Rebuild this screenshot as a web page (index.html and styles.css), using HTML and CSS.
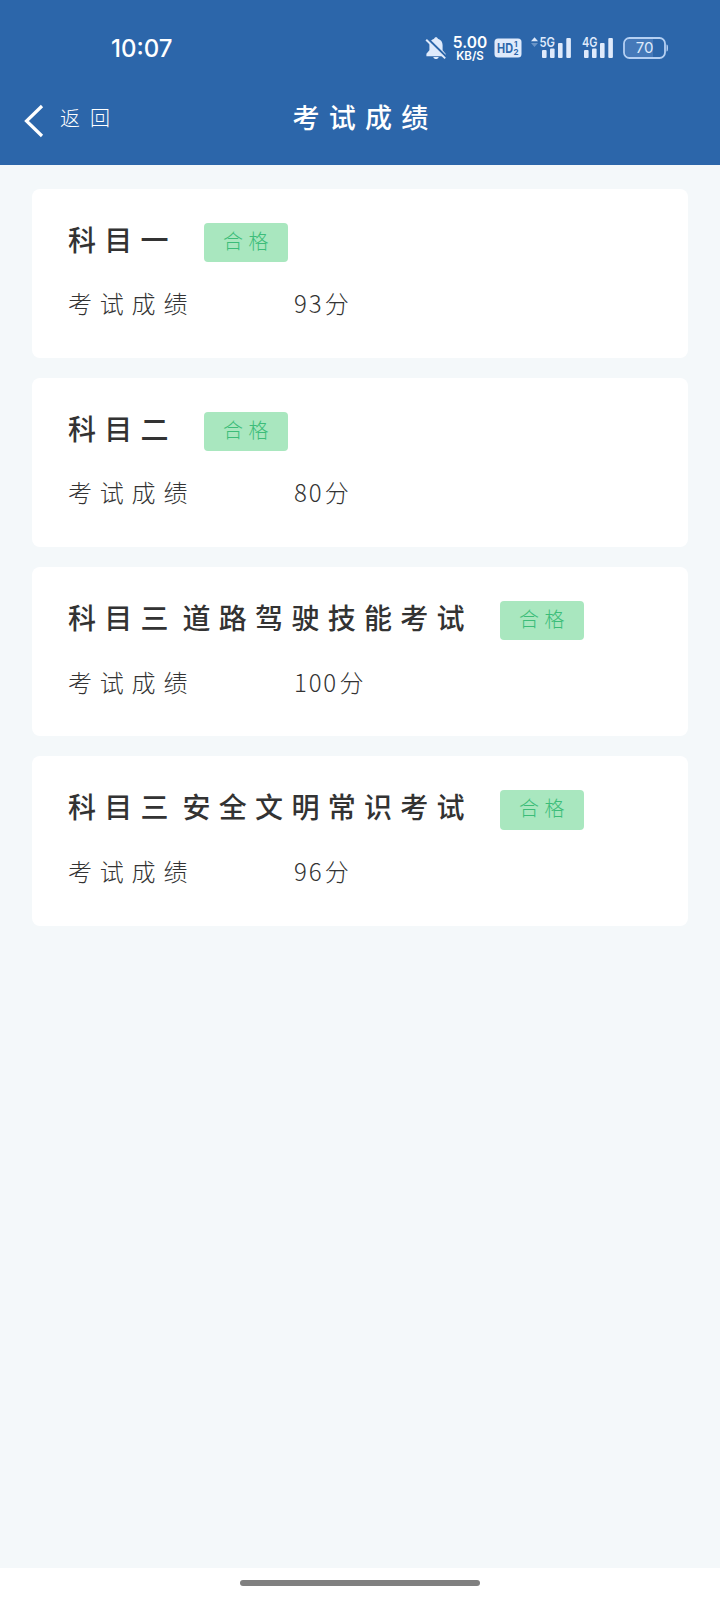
FILE: index.html
```html
<!DOCTYPE html>
<html lang="zh-CN">
<head>
    <meta charset="UTF-8">
    <meta name="viewport" content="width=device-width, initial-scale=1.0">
    <title>考试成绩</title>
    <link rel="stylesheet" href="styles.css">
</head>
<body>

    <header class="header">
        <div class="status-bar">
            <span class="time">10:07</span>
            <div class="status-icons">
                <svg class="icon-bell" width="22" height="24" viewBox="0 0 22 24">
                    <path d="M11 1.2c1 0 1.7.6 1.9 1.5 3 .8 4.7 3.2 4.7 6.4v5.2l3 3.5v2.4H1.4v-2.4l3-3.5V9.1c0-3.2 1.7-5.6 4.7-6.4.2-.9.9-1.5 1.9-1.5z" fill="#dfeafb"/>
                    <path d="M8.3 21h5.4c-.4 1.4-1.4 2-2.7 2s-2.3-.6-2.7-2z" fill="#dfeafb"/>
                    <path d="M2.6 2.6l19 18.6" stroke="#2c66aa" stroke-width="2.2"/>
                    <path d="M1.2 3.8l19 18.6" stroke="#dfeafb" stroke-width="2"/>
                </svg>
                <div class="speed">
                    <span class="speed-num">5.00</span>
                    <span class="speed-unit">KB/S</span>
                </div>
                <svg class="icon-hd" width="28" height="20" viewBox="0 0 28 20">
                    <rect x="0.5" y="0.5" width="27" height="19" rx="3.5" fill="#dfeafb"/>
                    <text x="3" y="14.8" font-size="13" textLength="16" lengthAdjust="spacingAndGlyphs">HD</text>
                    <text x="20" y="9.2" font-size="8">1</text>
                    <text x="19.5" y="17.4" font-size="8">2</text>
                </svg>
                <svg class="icon-signal signal-5g" width="42" height="24" viewBox="0 0 42 24">
                    <path d="M1 6.2l3.5-4 3.5 4z"/>
                    <path d="M1 8l3.5 4L8 8z" opacity="0.35"/>
                    <text x="9.5" y="12.4" font-size="13" textLength="15.5" lengthAdjust="spacingAndGlyphs">5G</text>
                    <rect x="12" y="15" width="4.6" height="8" rx="1"/>
                    <rect x="20" y="13.5" width="4.6" height="9.5" rx="1"/>
                    <rect x="28" y="8" width="4.6" height="15" rx="1"/>
                    <rect x="36.3" y="3" width="4.6" height="20" rx="1"/>
                </svg>
                <svg class="icon-signal signal-4g" width="32" height="24" viewBox="0 0 32 24">
                    <text x="0" y="12.4" font-size="13" textLength="15.5" lengthAdjust="spacingAndGlyphs">4G</text>
                    <rect x="2" y="15" width="4.6" height="8" rx="1"/>
                    <rect x="10" y="13.5" width="4.6" height="9.5" rx="1"/>
                    <rect x="18" y="8" width="4.6" height="15" rx="1"/>
                    <rect x="26.3" y="3" width="4.6" height="20" rx="1"/>
                </svg>
                <svg class="icon-battery" width="46" height="22" viewBox="0 0 46 22">
                    <path d="M7 2h23v18H7a5 5 0 0 1-5-5V7a5 5 0 0 1 5-5z" fill="#4579b9"/>
                    <rect x="1" y="1" width="41" height="20" rx="5.5" fill="none" stroke="#b5d0f3" stroke-width="1.8"/>
                    <path d="M43.5 7.5c1.3.3 1.5 1.2 1.5 3.5s-.2 3.2-1.5 3.5z" fill="#b5d0f3"/>
                    <text x="21.5" y="16.4" font-size="15" text-anchor="middle">70</text>
                </svg>
            </div>
        </div>
        <nav class="nav-bar">
            <a href="#" class="back-button">
                <svg width="20" height="34" viewBox="0 0 20 34">
                    <path d="M18 2L2.500 17 18 32" fill="none" stroke="#fff" stroke-width="3.2"/>
                </svg>
                <span>返回</span>
            </a>
            <h1 class="page-title">考试成绩</h1>
        </nav>
    </header>

    <main class="score-list">
        <section class="card">
            <div class="card-head">
                <h2>科目一</h2>
                <span class="badge">合格</span>
            </div>
            <div class="card-row">
                <span class="label">考试成绩</span>
                <span class="score">93<span class="unit">分</span></span>
            </div>
        </section>

        <section class="card">
            <div class="card-head">
                <h2>科目二</h2>
                <span class="badge">合格</span>
            </div>
            <div class="card-row">
                <span class="label">考试成绩</span>
                <span class="score">80<span class="unit">分</span></span>
            </div>
        </section>

        <section class="card">
            <div class="card-head">
                <h2>科目三 道路驾驶技能考试</h2>
                <span class="badge">合格</span>
            </div>
            <div class="card-row">
                <span class="label">考试成绩</span>
                <span class="score">100<span class="unit">分</span></span>
            </div>
        </section>

        <section class="card">
            <div class="card-head">
                <h2>科目三 安全文明常识考试</h2>
                <span class="badge">合格</span>
            </div>
            <div class="card-row">
                <span class="label">考试成绩</span>
                <span class="score">96<span class="unit">分</span></span>
            </div>
        </section>
    </main>

    <footer class="home-area">
        <div class="home-bar"></div>
    </footer>

</body>
</html>
```
FILE: styles.css
```css
* {
    margin: 0;
    padding: 0;
    box-sizing: border-box;
}

body {
    display: flex;
    flex-direction: column;
    height: 1600px;
    background: #f4f8fa;
    font-family: "Noto Sans CJK SC", sans-serif;
    color: #333;
}

.header {
    height: 164.5px;
    background: #2c66aa;
    color: white;
}

/* Status bar */
.status-bar {
    display: flex;
    justify-content: space-between;
    align-items: center;
    height: 96px;
    padding: 0 51px 0 111px;
    font-family: Inter, sans-serif;
}

.time {
    margin-top: 2px;
    font-size: 24px;
    font-weight: 500;
    line-height: 30px;
}

.status-icons {
    display: flex;
    align-items: center;
}

.speed {
    display: flex;
    flex-direction: column;
    align-items: center;
    width: 36px;
    margin: 2px 6px 0 4px;
    font-weight: 600;
}

.speed-num {
    font-size: 15.5px;
    line-height: 14px;
}

.speed-unit {
    font-size: 11.5px;
    line-height: 12px;
}

.icon-bell {
    margin-right: 1px;
}

.icon-hd {
    margin-right: 8px;
    fill: #2c66aa;
    font-weight: 700;
}

.icon-signal {
    margin-top: -2px;
    overflow: visible;
    fill: #dfeafb;
    font-weight: 600;
}

.signal-5g {
    margin-right: 10px;
}

.signal-4g {
    margin-right: 9px;
}

.icon-battery {
    fill: #dfeafb;
}

/* Title bar */
.nav-bar {
    display: grid;
    grid-template-columns: 1fr auto 1fr;
    align-items: center;
    height: 44px;
    padding: 0 24px;
}

.back-button {
    display: flex;
    align-items: center;
    gap: 16px;
    padding-top: 5px;
    color: white;
    font-size: 20px;
    font-weight: 300;
    line-height: 30px;
    letter-spacing: 10px;
    text-decoration: none;
}

.back-button span {
    margin-top: -5px;
}

.page-title {
    margin: -2px 0 0 10px;
    font-size: 27px;
    font-weight: 500;
    line-height: 40px;
    letter-spacing: 9.3px;
}

/* Score cards */
.score-list {
    display: flex;
    flex-direction: column;
    flex: 1;
    gap: 20px;
    padding: 24px 32px;
}

.card {
    height: 169.3px;
    padding: 34px 36px 0;
    background: white;
    border-radius: 8px;
}

.card-head {
    display: flex;
    align-items: flex-start;
    gap: 27px;
    height: 40px;
}

.card-head h2 {
    margin-top: -4px;
    font-size: 28px;
    font-weight: 500;
    line-height: 40px;
    letter-spacing: 8.3px;
    word-spacing: -9px;
}

.badge {
    width: 84px;
    height: 39.3px;
    padding-left: 19px;
    background: #a9e7bf;
    border-radius: 4px;
    color: #3cbd79;
    font-size: 20px;
    font-weight: 300;
    line-height: 36px;
    letter-spacing: 5.5px;
    white-space: nowrap;
}

.card-row {
    display: flex;
    align-items: center;
    height: 36px;
    margin-top: 22.5px;
    font-size: 24px;
    font-weight: 300;
    line-height: 36px;
}

.label {
    width: 226px;
    letter-spacing: 7.8px;
}

.score {
    letter-spacing: 1.8px;
}

.unit {
    margin-left: 1.5px;
}

/* Bottom gesture area */
.home-area {
    display: flex;
    justify-content: center;
    height: 32px;
    padding-top: 12px;
    background: white;
}

.home-bar {
    width: 240px;
    height: 6px;
    background: #808080;
    border-radius: 3px;
}
```
